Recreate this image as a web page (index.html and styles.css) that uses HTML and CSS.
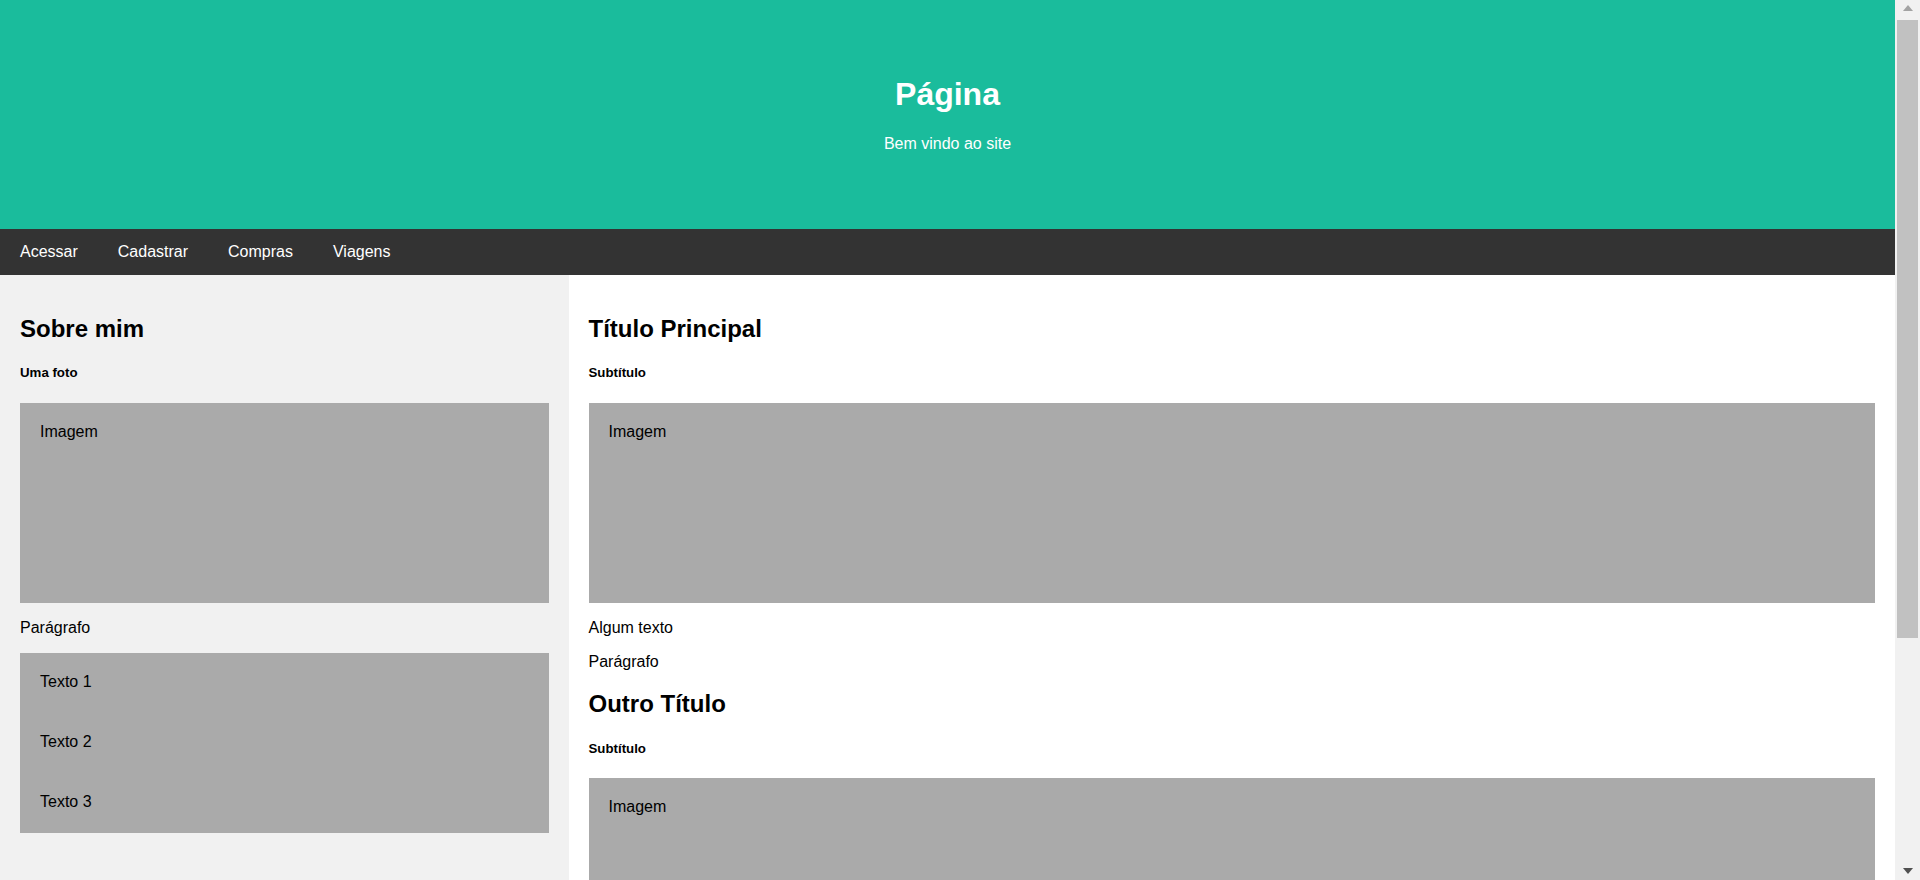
FILE: index.html
```html
<!DOCTYPE html>
<html lang="pt">
<head>
<meta charset="utf-8">
<title>Página</title>
<link rel="stylesheet" href="styles.css">
</head>
<body>
<div class="page">
  <div class="header">
    <h1>Página</h1>
    <p>Bem vindo ao site</p>
  </div>

  <div class="navbar">
    <a href="#">Acessar</a>
    <a href="#">Cadastrar</a>
    <a href="#">Compras</a>
    <a href="#">Viagens</a>
  </div>

  <div class="row">
    <div class="side">
      <h2>Sobre mim</h2>
      <h5>Uma foto</h5>
      <div class="fakeimg tall">Imagem</div>
      <p>Parágrafo</p>
      <div class="fakeimg short">Texto 1</div>
      <div class="fakeimg short">Texto 2</div>
      <div class="fakeimg short">Texto 3</div>
    </div>
    <div class="main">
      <h2>Título Principal</h2>
      <h5>Subtítulo</h5>
      <div class="fakeimg tall">Imagem</div>
      <p>Algum texto</p>
      <p>Parágrafo</p>
      <h2>Outro Título</h2>
      <h5>Subtítulo</h5>
      <div class="fakeimg tall">Imagem</div>
      <p>Algum texto</p>
      <p>Parágrafo</p>
    </div>
  </div>

  <div class="footer">
    <h2>Rodapé</h2>
  </div>
</div>
<div class="scrollbar" aria-hidden="true">
  <div class="sb-btn sb-up"><span class="tri-up"></span></div>
  <div class="sb-track">
    <div class="sb-thumb"></div>
  </div>
  <div class="sb-btn sb-down"><span class="tri-down"></span></div>
</div>
</body>
</html>
```
FILE: styles.css
```css
* {
  box-sizing: border-box;
}

html, body {
  height: 100%;
}

body {
  font-family: "Liberation Sans", Arial, sans-serif;
  margin: 0;
  color: #000;
  display: flex;
  align-items: flex-start;
  overflow: hidden;
}

.page {
  flex: 1 1 auto;
  min-width: 0;
}

/* Scrollbar column */
.scrollbar {
  flex: 0 0 25px;
  height: 100vh;
  background: #f1f1f1;
  display: flex;
  flex-direction: column;
}

.sb-btn {
  flex: 0 0 20px;
  display: flex;
  justify-content: center;
}

.sb-up {
  align-items: flex-start;
  padding-top: 5px;
}

.sb-down {
  align-items: flex-end;
  padding-bottom: 6px;
}

.tri-up {
  width: 0;
  height: 0;
  border-left: 5.5px solid transparent;
  border-right: 5.5px solid transparent;
  border-bottom: 6px solid #a3a3a3;
}

.tri-down {
  width: 0;
  height: 0;
  border-left: 5.5px solid transparent;
  border-right: 5.5px solid transparent;
  border-top: 6px solid #505050;
}

.sb-track {
  flex: 1 1 auto;
  padding: 0 2px;
}

.sb-thumb {
  height: 618px;
  background: #c1c1c1;
}

/* Page */
.header {
  padding: 55px 60px 60px;
  text-align: center;
  background: #1abc9c;
  color: white;
}

.header h1 {
  font-size: 32px;
  margin: 21.44px 0;
}

.header p {
  margin: 16px 0;
}

.navbar {
  display: flex;
  background-color: #333;
}

.navbar a {
  display: block;
  color: white;
  text-align: center;
  padding: 14px 20px;
  text-decoration: none;
  font-size: 16px;
  line-height: 18.4px;
}

.row {
  display: flex;
}

.side {
  flex: 0 0 30%;
  background-color: #f1f1f1;
  padding: 20px;
}

.main {
  flex: 1 1 70%;
  background-color: white;
  padding: 20px;
}

h2 {
  font-size: 24px;
  margin: 19.92px 0;
}

h5 {
  font-size: 13.28px;
  margin: 22.18px 0;
}

p {
  margin: 16px 0;
}

.fakeimg {
  background-color: #aaa;
  width: 100%;
  padding: 20px;
}

.tall {
  height: 200px;
}

.short {
  height: 60px;
}

.footer {
  padding: 20px;
  text-align: center;
  background: #ddd;
}
```
